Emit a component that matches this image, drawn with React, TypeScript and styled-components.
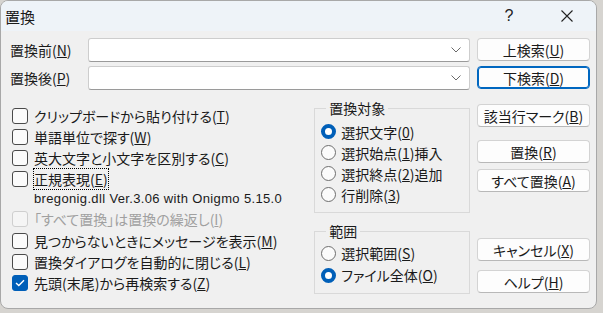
import React from "react";
import styled, { createGlobalStyle } from "styled-components";

const GlobalStyle = createGlobalStyle`
  html, body { margin: 0; padding: 0; background: #d6d4d0; }
  body {
    font-family: "Noto Sans CJK JP", "Noto Sans", sans-serif;
    font-size: 14px;
    color: #1a1a1a;
  }
  #root { width: 603px; height: 313px; }
`;

const Window = styled.div`
  width: 597px;
  height: 309px;
  box-sizing: border-box;
  border: 1px solid #a8a8a8;
  border-radius: 8px;
  background: #f0f0f0;
  overflow: hidden;
  display: flex;
  flex-direction: column;
  font-feature-settings: "palt";
`;

const TitleBar = styled.div`
  height: 30px;
  flex: none;
  background: #eef3f8;
  display: flex;
  align-items: center;
  padding-left: 4px;
`;

const Title = styled.span`
  font-size: 15px;
  flex: 1;
`;

const TitleButton = styled.div`
  width: 58px;
  height: 30px;
  display: flex;
  align-items: center;
  justify-content: center;
  font-family: "Liberation Sans", sans-serif;
  font-size: 16px;
  color: #222;
`;

const Body = styled.div`
  display: grid;
  grid-template-columns: 460px 113px;
  column-gap: 7px;
  padding: 7px 0 0 9px;
`;

const LeftCol = styled.div`
  display: flex;
  flex-direction: column;
`;

const FieldRow = styled.div<{ $mt?: number }>`
  display: flex;
  align-items: center;
  height: 24px;
  margin-top: ${(p) => p.$mt ?? 0}px;
`;

const FieldLabel = styled.label`
  width: 78px;
`;

const Combo = styled.div`
  flex: 1;
  height: 24px;
  box-sizing: border-box;
  background: #ffffff;
  border: 1px solid #cdcdcd;
  border-bottom-color: #9a9a9a;
  border-radius: 3px;
  display: flex;
  align-items: center;
  justify-content: flex-end;
  padding-right: 8px;
`;

const Lower = styled.div`
  display: flex;
  margin-top: 9px;
`;

const Options = styled.div`
  width: 305px;
  display: flex;
  flex-direction: column;
  padding-top: 6px;
`;

const CheckRow = styled.label<{ $disabled?: boolean; $h?: number }>`
  display: flex;
  align-items: center;
  gap: 6px;
  height: ${(p) => p.$h ?? 21}px;
  padding-left: 2px;
  color: ${(p) => (p.$disabled ? "#a0a0a0" : "#1a1a1a")};
  white-space: nowrap;
`;

const Box = styled.span<{ $checked?: boolean; $disabled?: boolean }>`
  width: 16px;
  height: 16px;
  box-sizing: border-box;
  flex: none;
  border-radius: 3px;
  border: 1px solid
    ${(p) => (p.$checked ? "#005fb8" : p.$disabled ? "#cfcfcf" : "#4a4a4a")};
  background: ${(p) => (p.$checked ? "#005fb8" : p.$disabled ? "#f5f5f5" : "#fbfbfb")};
  display: flex;
  align-items: center;
  justify-content: center;
`;

const Focus = styled.span`
  outline: 1px dotted #000;
  outline-offset: 0;
`;

const Info = styled.div`
  height: 19px;
  line-height: 19px;
  padding-left: 24px;
  font-family: "Liberation Sans", "Noto Sans CJK JP", sans-serif;
  font-size: 13px;
  letter-spacing: 0.35px;
  font-feature-settings: normal;
`;

const Groups = styled.div`
  width: 156px;
  display: flex;
  flex-direction: column;
  gap: 9px;
`;

const Group = styled.fieldset<{ $pt: number }>`
  margin: 0;
  padding: ${(p) => p.$pt}px 4px 7px 6px;
  border: 1px solid #d9d9d9;
  display: flex;
  flex-direction: column;
`;

const Legend = styled.legend`
  padding: 0 3px;
  margin-left: 5px;
  line-height: 18px;
`;

const RadioRow = styled.label<{ $h?: number }>`
  display: flex;
  align-items: center;
  gap: 5px;
  height: ${(p) => p.$h ?? 21}px;
  white-space: nowrap;
`;

const Radio = styled.span<{ $checked?: boolean }>`
  width: 15px;
  height: 15px;
  box-sizing: border-box;
  flex: none;
  border-radius: 50%;
  border: ${(p) => (p.$checked ? "4.5px solid #005fb8" : "1px solid #6e6e6e")};
  background: ${(p) => (p.$checked ? "#ffffff" : "#fbfbfb")};
`;

const RightCol = styled.div`
  display: flex;
  flex-direction: column;
`;

const Button = styled.button<{ $mt?: number; $default?: boolean }>`
  height: 23px;
  margin-top: ${(p) => p.$mt ?? 0}px;
  box-sizing: border-box;
  padding: 0;
  border-radius: 4px;
  border: 1px solid ${(p) => (p.$default ? "#0067c0" : "#d3d3d3")};
  border-bottom-color: ${(p) => (p.$default ? "#0067c0" : "#b8b8b8")};
  box-shadow: ${(p) => (p.$default ? "inset 0 0 0 1px #0067c0" : "none")};
  background: #fdfdfd;
  font-family: inherit;
  font-size: 14px;
  font-feature-settings: "palt";
  color: #1a1a1a;
`;

const Check = () => (
  <svg width="10" height="8" viewBox="0 0 10 8">
    <polyline points="1,4 3.8,6.6 9,1.2" fill="none" stroke="#fff" strokeWidth="1.4" />
  </svg>
);

const Chevron = () => (
  <svg width="10" height="6" viewBox="0 0 10 6">
    <polyline points="0.5,0.5 5,5 9.5,0.5" fill="none" stroke="#6a6a6a" strokeWidth="1" />
  </svg>
);

const CloseIcon = () => (
  <svg width="12" height="12" viewBox="0 0 12 12">
    <path d="M0.5 0.5 L11.5 11.5 M11.5 0.5 L0.5 11.5" stroke="#222" strokeWidth="1.1" />
  </svg>
);

type CheckDef = { text: string; key: string; checked?: boolean; disabled?: boolean; focus?: boolean; h?: number };

const checks: CheckDef[] = [
  { text: "クリップボードから貼り付ける", key: "T" },
  { text: "単語単位で探す", key: "W" },
  { text: "英大文字と小文字を区別する", key: "C" },
  { text: "正規表現", key: "E", focus: true },
];

const checks2: CheckDef[] = [
  { text: "「すべて置換」は置換の繰返し", key: "I", disabled: true, h: 22 },
  { text: "見つからないときにメッセージを表示", key: "M" },
  { text: "置換ダイアログを自動的に閉じる", key: "L" },
  { text: "先頭(末尾)から再検索する", key: "Z", checked: true },
];

const Mn = ({ text, k }: { text: string; k: string }) => (
  <>
    {text}(<u>{k}</u>)
  </>
);

const CheckItem = ({ c }: { c: CheckDef }) => (
  <CheckRow $disabled={c.disabled} $h={c.h}>
    <Box $checked={c.checked} $disabled={c.disabled}>{c.checked && <Check />}</Box>
    {c.focus ? (
      <Focus>
        <Mn text={c.text} k={c.key} />
      </Focus>
    ) : (
      <span>
        <Mn text={c.text} k={c.key} />
      </span>
    )}
  </CheckRow>
);

export default function App() {
  return (
    <>
      <GlobalStyle />
      <Window>
        <TitleBar>
          <Title>置換</Title>
          <TitleButton>?</TitleButton>
          <TitleButton>
            <CloseIcon />
          </TitleButton>
        </TitleBar>
        <Body>
          <LeftCol>
            <FieldRow>
              <FieldLabel>
                <Mn text="置換前" k="N" />
              </FieldLabel>
              <Combo>
                <Chevron />
              </Combo>
            </FieldRow>
            <FieldRow $mt={4}>
              <FieldLabel>
                <Mn text="置換後" k="P" />
              </FieldLabel>
              <Combo>
                <Chevron />
              </Combo>
            </FieldRow>
            <Lower>
              <Options>
                {checks.map((c) => (
                  <CheckItem key={c.key} c={c} />
                ))}
                <Info>bregonig.dll Ver.3.06 with Onigmo 5.15.0</Info>
                {checks2.map((c) => (
                  <CheckItem key={c.key} c={c} />
                ))}
              </Options>
              <Groups>
                <Group $pt={4}>
                  <Legend>置換対象</Legend>
                  <RadioRow>
                    <Radio $checked />
                    <span>
                      <Mn text="選択文字" k="0" />
                    </span>
                  </RadioRow>
                  <RadioRow>
                    <Radio />
                    <span>
                      選択始点(<u>1</u>)挿入
                    </span>
                  </RadioRow>
                  <RadioRow>
                    <Radio />
                    <span>
                      選択終点(<u>2</u>)追加
                    </span>
                  </RadioRow>
                  <RadioRow>
                    <Radio />
                    <span>
                      <Mn text="行削除" k="3" />
                    </span>
                  </RadioRow>
                </Group>
                <Group $pt={2}>
                  <Legend>範囲</Legend>
                  <RadioRow $h={22}>
                    <Radio />
                    <span>
                      <Mn text="選択範囲" k="S" />
                    </span>
                  </RadioRow>
                  <RadioRow $h={22}>
                    <Radio $checked />
                    <span>
                      <Mn text="ファイル全体" k="O" />
                    </span>
                  </RadioRow>
                </Group>
              </Groups>
            </Lower>
          </LeftCol>
          <RightCol>
            <Button>
              <Mn text="上検索" k="U" />
            </Button>
            <Button $mt={5} $default>
              <Mn text="下検索" k="D" />
            </Button>
            <Button $mt={15}>
              <Mn text="該当行マーク" k="B" />
            </Button>
            <Button $mt={13}>
              <Mn text="置換" k="R" />
            </Button>
            <Button $mt={6}>
              <Mn text="すべて置換" k="A" />
            </Button>
            <Button $mt={46}>
              <Mn text="キャンセル" k="X" />
            </Button>
            <Button $mt={9}>
              <Mn text="ヘルプ" k="H" />
            </Button>
          </RightCol>
        </Body>
      </Window>
    </>
  );
}
